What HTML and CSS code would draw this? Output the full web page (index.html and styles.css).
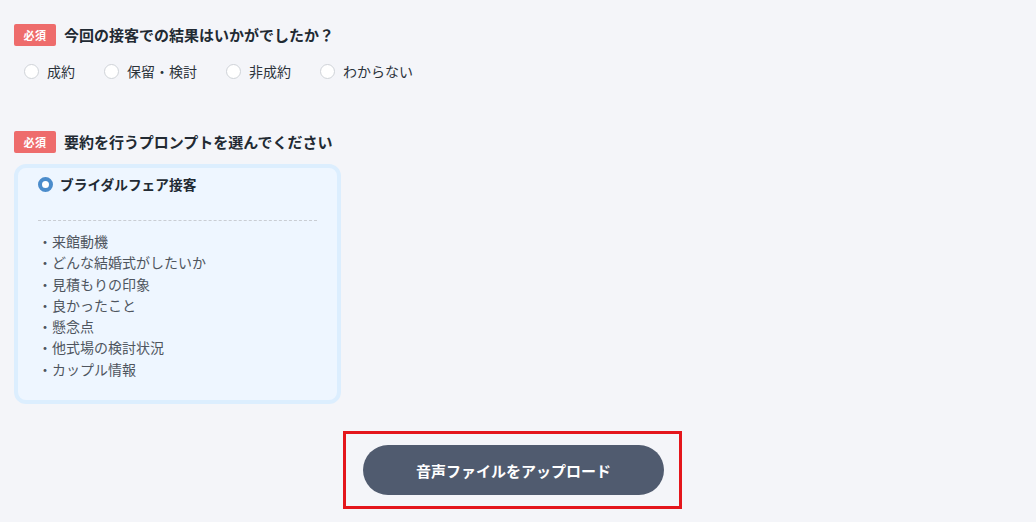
FILE: index.html
```html
<!DOCTYPE html>
<html lang="ja">
<head>
<meta charset="utf-8">
<link rel="stylesheet" href="styles.css">
</head>
<body>
<main class="page">
  <section class="field">
    <div class="field-head">
      <span class="badge">必須</span>
      <h2 class="field-title">今回の接客での結果はいかがでしたか？</h2>
    </div>
    <div class="options">
      <label class="option"><span class="radio"></span><span>成約</span></label>
      <label class="option"><span class="radio"></span><span>保留・検討</span></label>
      <label class="option"><span class="radio"></span><span>非成約</span></label>
      <label class="option"><span class="radio"></span><span>わからない</span></label>
    </div>
  </section>

  <section class="field field-prompt">
    <div class="field-head">
      <span class="badge">必須</span>
      <h2 class="field-title">要約を行うプロンプトを選んでください</h2>
    </div>
    <div class="card">
      <div class="card-head">
        <span class="radio radio-checked"></span>
        <span class="card-title">ブライダルフェア接客</span>
      </div>
      <hr class="divider">
      <ul class="items">
        <li>・来館動機</li>
        <li>・どんな結婚式がしたいか</li>
        <li>・見積もりの印象</li>
        <li>・良かったこと</li>
        <li>・懸念点</li>
        <li>・他式場の検討状況</li>
        <li>・カップル情報</li>
      </ul>
    </div>
  </section>

  <div class="actions">
    <div class="highlight">
      <button class="upload" type="button">音声ファイルをアップロード</button>
    </div>
  </div>
</main>
</body>
</html>
```
FILE: styles.css
```css
* { box-sizing: border-box; }
html, body {
  margin: 0;
  padding: 0;
  background: #f4f5f9;
}
body {
  font-family: "Noto Sans CJK JP", "Noto Sans", sans-serif;
  color: #222a33;
}
.page {
  padding: 24px 14px 0 14px;
}
.field-head {
  display: flex;
  align-items: center;
  gap: 8px;
  height: 22px;
}
.badge {
  display: inline-flex;
  align-items: center;
  justify-content: center;
  width: 42px;
  height: 22px;
  border-radius: 2px;
  background: #ee6c6c;
  color: #fff;
  font-size: 11px;
  font-weight: 700;
  letter-spacing: 0.5px;
}
.field-title {
  margin: 0;
  font-size: 15px;
  font-weight: 700;
  line-height: 22px;
  color: #222a33;
}
.options {
  display: flex;
  align-items: center;
  margin-top: 15px;
  padding-left: 10px;
  height: 20px;
}
.option {
  display: flex;
  align-items: center;
  gap: 8px;
  margin-right: 29px;
  font-size: 14px;
  line-height: 20px;
  color: #2c333b;
}
.radio {
  display: inline-block;
  width: 15px;
  height: 15px;
  border-radius: 50%;
  background: #fff;
  border: 1px solid #cfd3d8;
  flex: none;
}
.radio-checked {
  border: 4.5px solid #4b8ccb;
  background: #fff;
}
.field-prompt {
  margin-top: 50px;
}
.card {
  margin-top: 11px;
  width: 327px;
  border: 4px solid #dceefe;
  border-radius: 12px;
  background: #eef6ff;
  padding: 5px 20px 20px 20px;
}
.card-head {
  display: flex;
  align-items: center;
  gap: 7px;
  height: 22px;
}
.card-title {
  font-size: 13.7px;
  font-weight: 700;
  line-height: 22px;
  color: #222a33;
}
.divider {
  margin: 25px 0 0 0;
  border: 0;
  border-top: 1px dashed #c9cdd3;
  height: 0;
}
.items {
  list-style: none;
  margin: 10px 0 0 0;
  padding: 0;
}
.items li {
  font-size: 14px;
  line-height: 21.3px;
  color: #4e555e;
}
.actions {
  display: flex;
  justify-content: center;
  margin-top: 27px;
  padding-right: 11px;
}
.highlight {
  border: 3px solid #e4161c;
  padding: 11px 15px 11px 17px;
}
.upload {
  width: 301px;
  height: 50px;
  border: 0;
  border-radius: 25px;
  background: #505b6f;
  color: #fff;
  font-family: "Noto Sans CJK JP", "Noto Sans", sans-serif;
  font-size: 15px;
  font-weight: 700;
  cursor: pointer;
}
```
